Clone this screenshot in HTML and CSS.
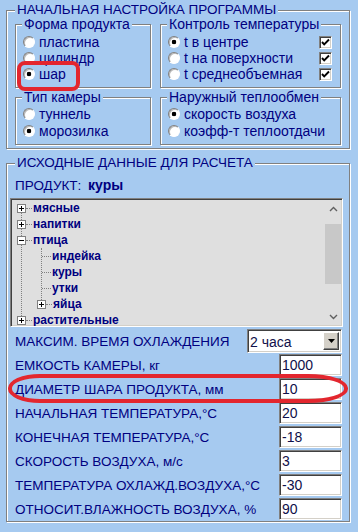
FILE: index.html
```html
<!DOCTYPE html>
<html>
<head>
<meta charset="utf-8">
<title>Начальная настройка программы</title>
<link rel="stylesheet" href="styles.css">
</head>
<body>
<div class="page">

	<div class="group outer setup">
		<div class="group-title caps">НАЧАЛЬНАЯ НАСТРОЙКА ПРОГРАММЫ</div>
		<div class="setup-grid">
			<div class="group sub">
				<div class="group-title">Форма продукта</div>
				<div class="opts">
					<div class="opt"><span class="radio"></span>пластина</div>
					<div class="opt"><span class="radio"></span>цилиндр</div>
					<div class="opt"><span class="radio on"></span>шар</div>
				</div>
			</div>
			<div class="group sub">
				<div class="group-title">Контроль температуры</div>
				<div class="opts">
					<div class="opt"><span class="radio on"></span><span class="opt-text">t в центре</span><span class="check"><svg width="9" height="9" viewBox="0 0 9 9"><path d="M1 4l2.2 2.4L8 1.5" fill="none" stroke="#000" stroke-width="1.9"/></svg></span></div>
					<div class="opt"><span class="radio"></span><span class="opt-text">t на поверхности</span><span class="check"><svg width="9" height="9" viewBox="0 0 9 9"><path d="M1 4l2.2 2.4L8 1.5" fill="none" stroke="#000" stroke-width="1.9"/></svg></span></div>
					<div class="opt"><span class="radio"></span><span class="opt-text">t среднеобъемная</span><span class="check"><svg width="9" height="9" viewBox="0 0 9 9"><path d="M1 4l2.2 2.4L8 1.5" fill="none" stroke="#000" stroke-width="1.9"/></svg></span></div>
				</div>
			</div>
			<div class="group sub">
				<div class="group-title">Тип камеры</div>
				<div class="opts tall">
					<div class="opt"><span class="radio"></span>туннель</div>
					<div class="opt"><span class="radio on"></span>морозилка</div>
				</div>
			</div>
			<div class="group sub">
				<div class="group-title">Наружный теплообмен</div>
				<div class="opts tall">
					<div class="opt"><span class="radio on"></span>скорость воздуха</div>
					<div class="opt"><span class="radio"></span>коэфф-т теплоотдачи</div>
				</div>
			</div>
		</div>
	</div>

	<div class="group outer data">
		<div class="group-title caps">ИСХОДНЫЕ ДАННЫЕ ДЛЯ РАСЧЕТА</div>
		<div class="product">ПРОДУКТ: <b>куры</b></div>

		<div class="tree">
			<div class="tree-items">
				<div class="node"><svg class="exp" width="9" height="9"><rect x="0.5" y="0.5" width="8" height="8" fill="#fff" stroke="#808080"/><path d="M2 4.5h5M4.5 2v5" stroke="#000"/></svg><span class="dots"></span><span class="node-text">мясные</span></div>
				<div class="node"><svg class="exp" width="9" height="9"><rect x="0.5" y="0.5" width="8" height="8" fill="#fff" stroke="#808080"/><path d="M2 4.5h5M4.5 2v5" stroke="#000"/></svg><span class="dots"></span><span class="node-text">напитки</span></div>
				<div class="node"><svg class="exp" width="9" height="9"><rect x="0.5" y="0.5" width="8" height="8" fill="#fff" stroke="#808080"/><path d="M2 4.5h5" stroke="#000"/></svg><span class="dots"></span><span class="node-text">птица</span></div>
				<div class="branch">
					<div class="node leaf"><span class="dots long"></span><span class="node-text">индейка</span></div>
					<div class="node leaf"><span class="dots long"></span><span class="node-text">куры</span></div>
					<div class="node leaf"><span class="dots long"></span><span class="node-text">утки</span></div>
					<div class="node child"><svg class="exp" width="9" height="9"><rect x="0.5" y="0.5" width="8" height="8" fill="#fff" stroke="#808080"/><path d="M2 4.5h5M4.5 2v5" stroke="#000"/></svg><span class="dots"></span><span class="node-text">яйца</span></div>
				</div>
				<div class="node"><svg class="exp" width="9" height="9"><rect x="0.5" y="0.5" width="8" height="8" fill="#fff" stroke="#808080"/><path d="M2 4.5h5M4.5 2v5" stroke="#000"/></svg><span class="dots"></span><span class="node-text">растительные</span></div>
			</div>
			<div class="scrollbar">
				<div class="sb-btn"><svg width="9" height="6"><path d="M1 5l3.5-3.5L8 5" fill="none" stroke="#606060" stroke-width="1.4"/></svg></div>
				<div class="sb-track"><div class="sb-thumb"></div></div>
				<div class="sb-btn"><svg width="9" height="6"><path d="M1 1l3.5 3.5L8 1" fill="none" stroke="#606060" stroke-width="1.4"/></svg></div>
			</div>
		</div>

		<div class="rows">
			<div class="row"><span>МАКСИМ. ВРЕМЯ ОХЛАЖДЕНИЯ</span>
				<div class="select"><span class="select-text">2 часа</span><span class="select-btn"><svg width="7" height="4"><path d="M0 0h7L3.5 4z" fill="#000"/></svg></span></div>
			</div>
			<div class="row"><span>ЕМКОСТЬ КАМЕРЫ, кг</span><div class="field">1000</div></div>
			<div class="row"><span>ДИАМЕТР ШАРА ПРОДУКТА, мм</span><div class="field">10</div></div>
			<div class="row"><span>НАЧАЛЬНАЯ ТЕМПЕРАТУРА,°С</span><div class="field">20</div></div>
			<div class="row"><span>КОНЕЧНАЯ ТЕМПЕРАТУРА,°С</span><div class="field">-18</div></div>
			<div class="row"><span>СКОРОСТЬ ВОЗДУХА, м/с</span><div class="field">3</div></div>
			<div class="row"><span>ТЕМПЕРАТУРА ОХЛАЖД.ВОЗДУХА,°С</span><div class="field">-30</div></div>
			<div class="row"><span>ОТНОСИТ.ВЛАЖНОСТЬ ВОЗДУХА, %</span><div class="field">90</div></div>
		</div>
	</div>

	<div class="mark mark-ball"></div>
	<div class="mark mark-diam"></div>
</div>
</body>
</html>
```

FILE: styles.css
```css
* {
	box-sizing: border-box;
}

body {
	margin: 0;
	background: #a6caf0;
	font-family: "Liberation Sans", Arial, sans-serif;
	font-size: 14px;
	color: #000080;
}

.page {
	position: relative;
	width: 358px;
	height: 532px;
	padding: 10px 0 0 6px;
	overflow: hidden;
}

/* group boxes (etched frame + caption on the line) */
.group {
	border: 1px solid #808080;
	box-shadow: 1px 1px 0 #fff, inset 1px 1px 0 #fff;
}
.outer {
	width: 344px;
}
.group-title {
	width: fit-content;
	margin: -8px 0 0 8px;
	padding: 0 2px;
	line-height: 14px;
	background: #a6caf0;
	white-space: nowrap;
}
.group-title.caps {
	font-size: 13.5px;
}
.sub .group-title {
	margin-left: 6px;
}

.setup-grid {
	display: grid;
	grid-template-columns: 136px 181px;
	grid-template-rows: 64px 48px;
	gap: 9px;
	margin: 7px 8px 3px 8px;
}

.opts {
	padding-top: 3px;
}
.opts.tall {
	padding-top: 1px;
}
.opt {
	display: flex;
	align-items: center;
	gap: 4px;
	height: 16px;
	padding-left: 7px;
	white-space: nowrap;
}
.tall .opt {
	height: 17px;
}
.opt-text {
	flex: 1;
}

.radio {
	width: 12px;
	height: 12px;
	border-radius: 50%;
	border: 1px solid;
	border-color: #808080 #fff #fff #808080;
	background: #fff;
	box-shadow: inset 1px 1px 0 #b8b8b8;
	flex: none;
}
.radio.on {
	background: radial-gradient(circle, #000 0, #000 2px, #fff 2.6px);
}

.check {
	display: flex;
	align-items: center;
	justify-content: center;
	width: 13px;
	height: 13px;
	margin-right: 8px;
	background: #fff;
	border: 1px solid;
	border-color: #808080 #fff #fff #808080;
	box-shadow: inset 1px 1px 0 #404040, inset -1px -1px 0 #d4d0c8;
	flex: none;
}

/* second block */
.data {
	margin-top: 14px;
}
.product {
	margin-top: 7px;
	padding-left: 8px;
	line-height: 16px;
	font-size: 13.5px;
}
.product b {
	margin-left: 3px;
	font-size: 14px;
}

.tree {
	display: flex;
	width: 333px;
	height: 129px;
	margin: 4px 0 0 3px;
	background: #dfdfdf;
	border: 1px solid;
	border-color: #808080 #fff #fff #808080;
	box-shadow: inset 1px 1px 0 #404040, inset -1px -1px 0 #d4d0c8;
	padding: 1px;
	overflow: hidden;
}
.tree-items {
	position: relative;
	z-index: 0;
	flex: 1;
	font-weight: bold;
	font-size: 12px;
}
.tree-items::before {
	content: "";
	position: absolute;
	left: 9px;
	top: 8px;
	height: 112px;
	border-left: 1px dotted #808080;
	z-index: -1;
}
.branch {
	position: relative;
	z-index: 0;
}
.branch::before {
	content: "";
	position: absolute;
	left: 29px;
	top: 0;
	height: 56px;
	border-left: 1px dotted #808080;
	z-index: -1;
}
.node {
	display: flex;
	align-items: center;
	height: 16px;
	padding-left: 5px;
	white-space: nowrap;
}
.node.leaf {
	padding-left: 30px;
}
.node.child {
	padding-left: 25px;
}
.exp {
	display: block;
	flex: none;
}
.dots {
	width: 6px;
	margin-right: 1px;
	border-top: 1px dotted #808080;
}
.dots.long {
	width: 9px;
}

.scrollbar {
	display: flex;
	flex-direction: column;
	width: 16px;
}
.sb-btn {
	display: flex;
	align-items: center;
	justify-content: center;
	height: 17px;
}
.sb-track {
	flex: 1;
	padding-top: 7px;
}
.sb-thumb {
	height: 60px;
	background: #c8c8c8;
}

/* data rows */
.rows {
	margin-top: 2px;
	font-size: 13.5px;
}
.row {
	display: flex;
	align-items: center;
	height: 24px;
	padding-left: 8px;
	white-space: nowrap;
}
.field,
.select {
	margin-left: auto;
	margin-right: 7px;
	background: #fff;
	border: 1px solid;
	border-color: #808080 #fff #fff #808080;
	box-shadow: inset 1px 1px 0 #404040, inset -1px -1px 0 #d4d0c8;
	color: #10104a;
	font-size: 14px;
}
.field {
	width: 63px;
	height: 22px;
	padding-left: 2px;
	line-height: 20px;
}
.select {
	display: flex;
	align-items: stretch;
	width: 95px;
	height: 24px;
	padding: 2px;
}
.select-text {
	flex: 1;
	line-height: 20px;
}
.select-btn {
	display: flex;
	align-items: center;
	justify-content: center;
	width: 16px;
	background: #d4d0c8;
	border: 1px solid;
	border-color: #fff #404040 #404040 #fff;
	box-shadow: inset -1px -1px 0 #808080;
}

/* red annotation marks drawn over the form */
.mark {
	position: absolute;
	border: 4px solid #e3262e;
}
.mark-ball {
	left: 17px;
	top: 61px;
	width: 63px;
	height: 30px;
	border-radius: 8px;
}
.mark-diam {
	left: 8px;
	top: 374px;
	width: 340px;
	height: 29px;
	border-radius: 32px 40px 40px 32px / 14px;
}
```
